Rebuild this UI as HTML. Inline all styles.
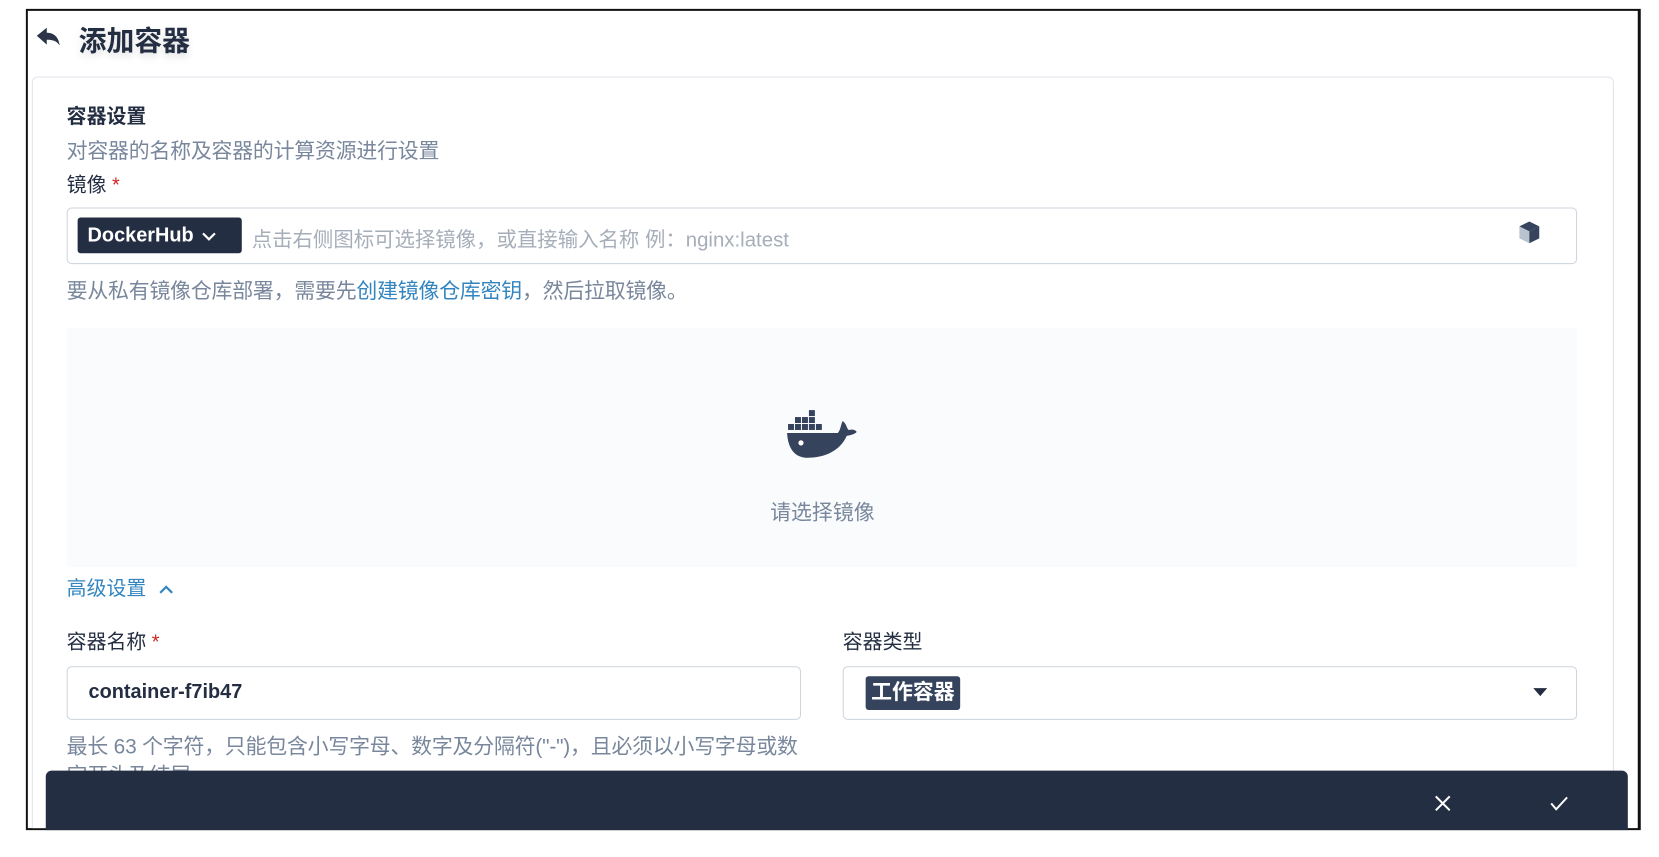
<!DOCTYPE html>
<html><head><meta charset="utf-8"><style>
*{margin:0;padding:0;box-sizing:border-box}
body{width:1659px;height:857px;background:#fff;position:relative;overflow:hidden;font-family:"Liberation Sans","Noto Sans CJK SC",sans-serif;color:#242e42}
#w{position:absolute;left:0;top:0;width:1659px;height:857px;transform:scale(0.995,0.993);transform-origin:0 0}
.a{position:absolute;white-space:nowrap}
.frame{position:absolute;left:26px;top:9px;width:1623px;height:827px;border:2px solid #111;border-right-width:3px;overflow:hidden}
.card{position:absolute;left:4px;top:66px;width:1590px;height:800px;border:1px solid #dfe3ea;border-radius:6px;background:#fff}
.box{position:absolute;border:1px solid #ccd3db;border-radius:5px;background:#fff}
.hint{color:#79879c;font-size:21px;letter-spacing:-0.2px}
</style></head><body><div id="w">
<div class="frame"><div class="card"></div></div>
<svg class="a" style="left:36px;top:27px" width="26" height="22" viewBox="0 0 26 22"><path d="M1 9 L11 1 L11 6 C18 6 23 10 24 19 C21 14 17 13 11 13 L11 18 Z" fill="#2b3547"/></svg>
<div class="a" style="left:79px;top:20px;font-size:28px;font-weight:bold;color:#242e42;text-shadow:0 4px 8px rgba(0,0,0,.12)">添加容器</div>
<div class="a" style="left:67px;top:101px;font-size:20px;font-weight:bold">容器设置</div>
<div class="a hint" style="left:67px;top:136px">对容器的名称及容器的计算资源进行设置</div>
<div class="a" style="left:67px;top:170px;font-size:20px">镜像 <span style="color:#ca2621">*</span></div>
<div class="box" style="left:67px;top:209px;width:1518px;height:57px"></div>
<div class="a" style="left:78px;top:219px;width:165px;height:36px;background:#242e42;border-radius:3px;color:#fff;font-size:20px;font-weight:bold;line-height:36px;padding-left:10px">DockerHub <svg style="vertical-align:middle;margin-left:2px" width="16" height="12" viewBox="0 0 16 12"><path d="M2 3 L8 9 L14 3" stroke="#fff" stroke-width="2.2" fill="none"/></svg></div>
<div class="a" style="left:253px;top:224px;font-size:20.5px;color:#a6aeb9">点击右侧图标可选择镜像，或直接输入名称 例：nginx:latest</div>
<svg class="a" style="left:1526px;top:222px" width="22" height="24" viewBox="0 0 22 24"><path d="M11 1 L21 6 L11 11 L1 6Z" fill="#36435c"/><path d="M1 6 L11 11 L11 23 L1 18Z" fill="#b9c3cf"/><path d="M21 6 L11 11 L11 23 L21 18Z" fill="#36435c"/></svg>
<div class="a hint" style="left:67px;top:277px">要从私有镜像仓库部署，需要先<span style="color:#3385c0">创建镜像仓库密钥</span>，然后拉取镜像。</div>
<div class="a" style="left:67px;top:330px;width:1518px;height:241px;background:#f9fbfd;border-radius:4px"></div>
<svg class="a" style="left:790px;top:411px" width="75" height="52" viewBox="0 0 75 52">
<g fill="#36435c"><rect x="23" y="2" width="6" height="6"/><rect x="9" y="9" width="6" height="6"/><rect x="16" y="9" width="6" height="6"/><rect x="23" y="9" width="6" height="6"/><rect x="2" y="16" width="6" height="6"/><rect x="9" y="16" width="6" height="6"/><rect x="16" y="16" width="6" height="6"/><rect x="23" y="16" width="6" height="6"/><rect x="30" y="16" width="6" height="6"/>
<path d="M1 25 L52 25 C55 22 55 16 57 13 C61 16 61 21 63 22 C67 21 70 22 71 24 C68 27 64 27 61 28 C55 42 40 50 22 50 C8 50 2 40 1 25Z"/></g>
<circle cx="15" cy="35" r="2.6" fill="#fff"/></svg>
<div class="a" style="left:774px;top:500px;font-size:21px;color:#79879c">请选择镜像</div>
<div class="a" style="left:67px;top:576px;font-size:20px;color:#3385c0">高级设置 <svg style="vertical-align:middle;margin-left:6px" width="16" height="12" viewBox="0 0 16 12"><path d="M2 9 L8 3 L14 9" stroke="#3385c0" stroke-width="2.2" fill="none"/></svg></div>
<div class="a" style="left:67px;top:630px;font-size:20px">容器名称 <span style="color:#ca2621">*</span></div>
<div class="a" style="left:847px;top:630px;font-size:20px">容器类型</div>
<div class="box" style="left:67px;top:671px;width:738px;height:54px"></div>
<div class="a" style="left:89px;top:686px;font-size:20px;font-weight:bold;color:#242e42">container-f7ib47</div>
<div class="box" style="left:847px;top:671px;width:738px;height:54px"></div>
<div class="a" style="left:870px;top:681px;width:95px;height:34px;background:#36435c;border-radius:3px;color:#fff;font-size:21px;font-weight:bold;line-height:34px;text-align:center">工作容器</div>
<svg class="a" style="left:1540px;top:692px" width="16" height="10" viewBox="0 0 16 10"><path d="M1 1 L15 1 L8 9Z" fill="#242e42"/></svg>
<div class="a hint" style="left:67px;top:736px">最长 63 个字符，只能包含小写字母、数字及分隔符("-")，且必须以小写字母或数</div>
<div class="a hint" style="left:67px;top:765px">字开头及结尾</div>
<div class="a" style="left:46px;top:776px;width:1590px;height:60px;background:#242e42;border-radius:6px 6px 0 0"></div>
<svg class="a" style="left:1441px;top:800px" width="18" height="18" viewBox="0 0 18 18"><path d="M2 2 L16 16 M16 2 L2 16" stroke="#fff" stroke-width="2"/></svg>
<svg class="a" style="left:1557px;top:800px" width="20" height="18" viewBox="0 0 20 18"><path d="M2 9 L7 15 L18 3" stroke="#fff" stroke-width="2" fill="none"/></svg>
</div></body></html>
